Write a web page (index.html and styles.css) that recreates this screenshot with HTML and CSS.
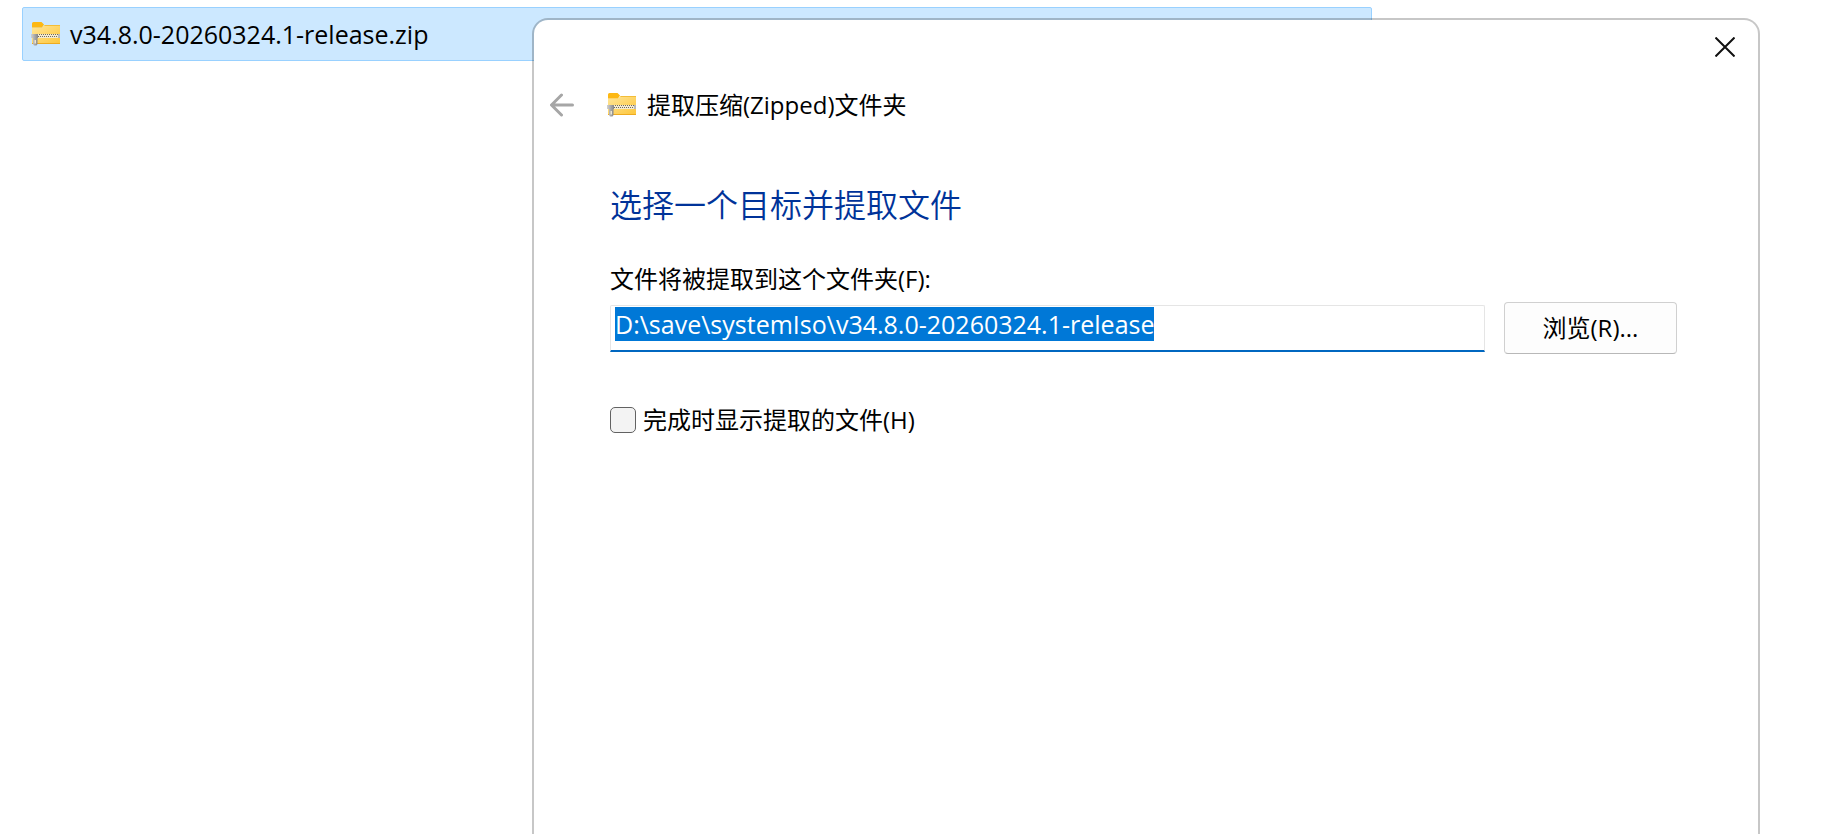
FILE: index.html
```html
<!DOCTYPE html>
<html lang="zh-CN">
	<head>
		<meta charset="utf-8">
		<title>提取压缩(Zipped)文件夹</title>
		<meta name="viewport" content="width=device-width, initial-scale=1.0">
		<link rel="stylesheet" href="styles.css">
	</head>
	<body>
		<svg class="defs" width="0" height="0" aria-hidden="true">
			<defs>
				<linearGradient id="folder" x1="0" y1="0" x2="1" y2="1">
					<stop offset="0" stop-color="#ffe69a"/>
					<stop offset="1" stop-color="#fdc63a"/>
				</linearGradient>
				<linearGradient id="metal" x1="0" y1="0" x2="1" y2="0">
					<stop offset="0" stop-color="#d2d2d2"/>
					<stop offset="1" stop-color="#858585"/>
				</linearGradient>
				<symbol id="zip" viewBox="0 0 29 24">
					<path d="M1 5.500H11L13.500 3H28Q29 3 29 4V21Q29 22 28 22H2Q1 22 1 21z" fill="url(#folder)"/>
					<path d="M13.500 3.500H29" stroke="#f3bd38"/>
					<path d="M1 5.500V1.500Q1 0 2.500 0H10.500L13 2.500L11 5.500z" fill="#fdb813"/>
					<path d="M1 21.500H29" stroke="#eeab20"/>
					<path d="M4 12H29V16H4z" fill="#f3ead0"/>
					<path d="M4 12.500H28" stroke="#70695c" stroke-dasharray="1 1"/>
					<path d="M5 14.500H28" stroke="#70695c" stroke-dasharray="1 1"/>
					<path d="M27 12H29V16H27z" fill="#b9b9b9"/>
					<path d="M0 12H7V16H6.500V22L5.500 23.500H3L2 22V16H0z" fill="url(#metal)"/>
					<path d="M3.500 18H5V21.500H3.500z" fill="#eee6cf"/>
				</symbol>
			</defs>
		</svg>

		<div class="file">
			<svg class="zip"><use href="#zip"/></svg>
			<span>v34.8.0-20260324.1-release.zip</span>
		</div>

		<form class="dialog">
			<button type="button" class="close" aria-label="关闭">
				<svg width="20" height="20" viewBox="0 0 20 20"><path d="M.5 .5L19.500 19.500M19.500 .5L.5 19.500"/></svg>
			</button>
			<div class="titlebar">
				<button type="button" class="back" aria-label="返回">
					<svg width="24" height="24" viewBox="0 0 24 24"><path d="M22.500 12H2M11.500 2L1.500 12L11.500 22"/></svg>
				</button>
				<svg class="zip"><use href="#zip"/></svg>
				<span>提取压缩(Zipped)文件夹</span>
			</div>
			<div class="content">
				<h1>选择一个目标并提取文件</h1>
				<label for="path">文件将被提取到这个文件夹(F):</label>
				<div class="pathrow">
					<input type="text" id="path" class="path" value="D:\save\systemIso\v34.8.0-20260324.1-release" spellcheck="false">
					<button type="button" class="browse">浏览(R)...</button>
				</div>
				<div class="show">
					<input type="checkbox" id="show">
					<label for="show">完成时显示提取的文件(H)</label>
				</div>
			</div>
		</form>
		<script src="script.js"></script>
	</body>
</html>
```

FILE: styles.css
```css
* {
	box-sizing: border-box;
}
body {
	margin: 0px;
	padding: 7px 450px 0px 22px;
	background: #ffffff;
	color: #000000;
	font-family: "Open Sans", "Noto Sans CJK SC", sans-serif;
	font-size: 24px;
	line-height: 32px;
}
button, input {
	font: inherit;
	color: inherit;
}
.defs {
	position: absolute;
}
.zip {
	width: 29px;
	height: 24px;
	flex: none;
}

/* selected file in the list behind the dialog */
.file {
	display: flex;
	align-items: center;
	gap: 10px;
	height: 54px;
	padding: 0px 8px;
	border: 1px solid #99d1ff;
	border-radius: 2px;
	background: #cce8ff;
	font-size: 25px;
}

.dialog {
	position: absolute;
	top: 18px;
	right: 62px;
	bottom: 0px;
	left: 532px;
	border: 2px solid rgba(0,0,0,0.22);
	border-bottom: none;
	border-radius: 16px 16px 0px 0px;
	background: #ffffff;
	background-clip: padding-box;
	display: flex;
	flex-direction: column;
}
.close, .back {
	display: flex;
	padding: 0px;
	border: none;
	background: none;
}
.close {
	align-self: flex-end;
	margin: 17px 23px 0px 0px;
}
.close path {
	stroke: #111111;
	stroke-width: 2;
	fill: none;
}
.titlebar {
	display: flex;
	align-items: center;
	gap: 11px;
	margin-top: 32px;
	padding-left: 16px;
}
.back {
	margin-right: 22px;
}
.back path {
	stroke: #a6a6a6;
	stroke-width: 3;
	stroke-linecap: round;
	stroke-linejoin: round;
	fill: none;
}

.content {
	display: flex;
	flex-direction: column;
	padding: 62px 81px 0px 76px;
}
h1 {
	margin: 0px 0px 36px;
	font-size: 32px;
	font-weight: 350;
	line-height: 44px;
	color: #003399;
}
.pathrow {
	display: flex;
	align-items: center;
	gap: 19px;
	margin-top: 7px;
}
.path {
	flex: 1;
	min-width: 0px;
	height: 47px;
	padding: 3px 4px 10px;
	border: 1px solid #e5e5e5;
	border-bottom: 2px solid #0067c0;
	border-radius: 2px 2px 0px 0px;
	background: #ffffff;
	font-size: 25px;
	line-height: 31px;
	outline: none;
}
.path::selection {
	background: #0078d7;
	color: #ffffff;
}
.browse {
	width: 173px;
	height: 52px;
	padding: 0px;
	border: 1px solid #d0d0d0;
	border-bottom-color: #b8b8b8;
	border-radius: 4px;
	background: #fdfdfd;
}
.show {
	display: flex;
	align-items: center;
	gap: 7px;
	margin-top: 50px;
}
.show input {
	appearance: none;
	width: 26px;
	height: 26px;
	margin: 0px;
	border: 1px solid #626262;
	border-radius: 5px;
	background: #f3f3f3;
}
```

FILE: script.js
```js
// the path starts out selected so it can be typed over
var path = document.getElementById("path");
path.focus();
path.select();
```
